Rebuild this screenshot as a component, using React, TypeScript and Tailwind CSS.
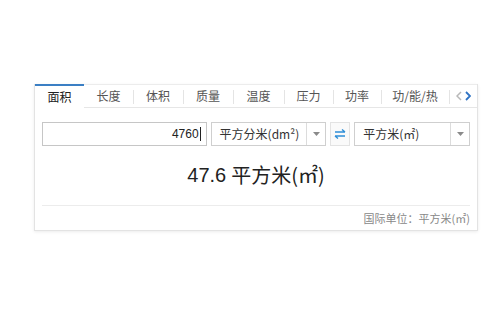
import React from "react";

const tabs = [
  { label: "面积", w: "w-[49px]" },
  { label: "长度", w: "w-[49px]" },
  { label: "体积", w: "w-[50px]" },
  { label: "质量", w: "w-[50px]" },
  { label: "温度", w: "w-[51px]" },
  { label: "压力", w: "w-[49px]" },
  { label: "功率", w: "w-[48px]" },
  { label: "功/能/热", w: "w-[68px]" },
];

function Caret() {
  return (
    <svg width="7" height="4" viewBox="0 0 7 4">
      <path d="M0 0 L7 0 L3.5 4 Z" fill="#8a8a8a" />
    </svg>
  );
}

function Select({ text }: { text: string }) {
  return (
    <div className="flex h-[24px] w-[116px] items-stretch border border-[#cfcfcf] bg-white">
      <div className="flex flex-1 items-center pl-[8px] text-[12px] text-[#333]">{text}</div>
      <div className="flex w-[19px] items-center justify-center border-l border-[#dcdcdc]">
        <Caret />
      </div>
    </div>
  );
}

export default function App() {
  return (
    <div
      className="h-[331px] w-[499px] bg-white pl-[34px] pt-[84px]"
      style={{ fontFamily: '"Noto Sans CJK SC", "Liberation Sans", sans-serif' }}
    >
      <div className="w-[444px] border border-t-0 border-[#e3e3e3] bg-white shadow-[0_1px_3px_rgba(0,0,0,0.08)]">
        {/* Tabs */}
        <div className="flex h-[24px] items-stretch">
          {tabs.map((t, i) => (
            <div
              key={t.label}
              className={
                i === 0
                  ? `${t.w} flex items-center justify-center border-t-2 border-[#3b7fc4] bg-white text-[12px] text-[#222]`
                  : `${t.w} relative flex items-center justify-center border-b border-t border-b-[#e6e6e6] border-t-[#ececec] text-[12px] text-[#555]`
              }
            >
              {i > 1 && (
                <span className="absolute left-0 top-[5px] h-[14px] w-px bg-[#e4e4e4]" />
              )}
              {t.label}
            </div>
          ))}
          <div className="relative flex flex-1 items-center justify-center gap-[3px] border-b border-t border-b-[#e6e6e6] border-t-[#ececec]">
            <span className="absolute left-0 top-[5px] h-[14px] w-px bg-[#e4e4e4]" />
            <svg width="6" height="10" viewBox="0 0 6 10">
              <path d="M5 1 L1 5 L5 9" stroke="#b8b8b8" strokeWidth="1.5" fill="none" />
            </svg>
            <svg width="6" height="10" viewBox="0 0 6 10">
              <path d="M1 1 L5 5 L1 9" stroke="#2f73c4" strokeWidth="1.8" fill="none" />
            </svg>
          </div>
        </div>

        {/* Inputs */}
        <div className="mt-[14px] flex items-center gap-[4px] px-[7px]">
          <div className="flex h-[24px] w-[165px] items-center justify-end border border-[#c6c6c6] pr-[5px] text-[12px] text-[#222]" style={{ fontFamily: '"Liberation Sans", sans-serif' }}>
            4760<span className="ml-px inline-block h-[14px] w-px bg-[#222]" />
          </div>
          <Select text="平方分米(dm²)" />
          <div className="flex h-[24px] w-[20px] items-center justify-center border border-[#e3e3e3] bg-[#fafafa]">
            <svg width="12" height="10" viewBox="0 0 12 10">
              <path d="M1 3 H11 M8 0.5 L11 3" stroke="#2f8fd8" strokeWidth="1.4" fill="none" />
              <path d="M11 7 H1 M4 9.5 L1 7" stroke="#2f8fd8" strokeWidth="1.4" fill="none" />
            </svg>
          </div>
          <Select text="平方米(㎡)" />
        </div>

        {/* Result */}
        <div className="flex h-[59px] items-center justify-center pb-[2px] text-[20px] text-[#222]">
          <span style={{ fontFamily: '"Liberation Sans", sans-serif' }}>47.6</span>
          <span className="ml-[5px]">平方米(㎡)</span>
        </div>

        {/* Footer */}
        <div className="mx-[7px] flex h-[25px] items-center justify-end border-t border-[#ececec] text-[11px] text-[#888]">
          国际单位：平方米(㎡)
        </div>
      </div>
    </div>
  );
}
